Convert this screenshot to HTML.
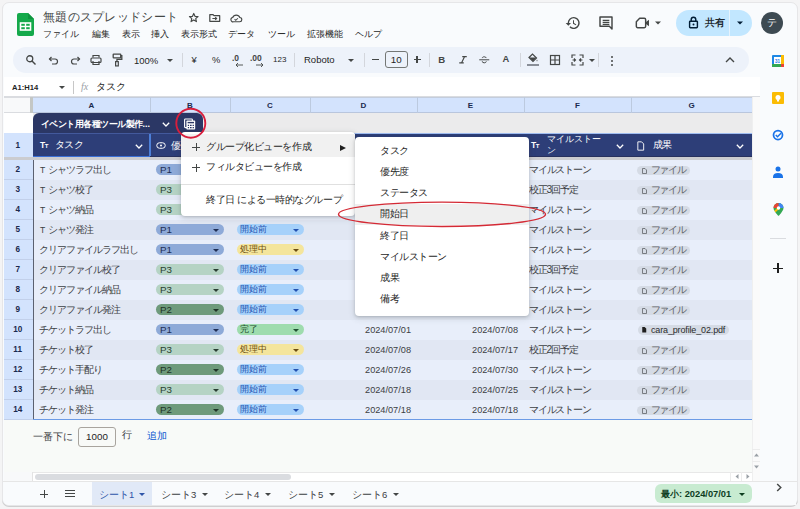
<!DOCTYPE html><html lang="ja"><head><meta charset="utf-8"><style>
*{box-sizing:border-box}
html,body{margin:0;padding:0}
body{width:800px;height:509px;overflow:hidden;position:relative;background:#f4f4f5;font-family:"Liberation Sans",sans-serif;}
.a{position:absolute}
.t{position:absolute;white-space:nowrap;line-height:1}
svg{position:absolute;overflow:visible}
</style></head><body>
<div class="a" style="left:2px;top:2px;width:796px;height:504px;background:#f9fbfd;border:1px solid #e6e6e8;border-radius:7px;box-shadow:0 1px 0 #cfcfd0"></div>
<svg style="left:17px;top:13px" width="17" height="23" viewBox="0 0 17 23"><path d="M2 0H11L17 6V21Q17 23 15 23H2Q0 23 0 21V2Q0 0 2 0Z" fill="#14a94b"/><path d="M11 0V6H17Z" fill="#0e943f"/><rect x="3.5" y="10" width="10" height="7" fill="none" stroke="#fff" stroke-width="1.6"/><line x1="8.5" y1="10" x2="8.5" y2="17" stroke="#fff" stroke-width="1.4"/><line x1="3.5" y1="13.5" x2="13.5" y2="13.5" stroke="#fff" stroke-width="1.4"/></svg>
<div class="t" style="left:43px;top:11.2px;font-size:12.4px;color:#444746;letter-spacing:0.3px">無題のスプレッドシート</div>
<svg style="left:187.5px;top:12px" width="11.5" height="11.5" viewBox="0 0 24 24"><path d="M12 3l2.6 6 6.4.5-4.9 4.2 1.5 6.3L12 16.6 6.4 20l1.5-6.3L3 9.5 9.4 9z" fill="none" stroke="#444746" stroke-width="2.4" stroke-linejoin="round"/></svg>
<svg style="left:209px;top:13.5px" width="11.5" height="8" viewBox="0 0 24 17"><path d="M1.5 1.5h7l2 2h12v12h-21z" fill="none" stroke="#444746" stroke-width="2.6" stroke-linejoin="round"/><path d="M7 9.5h9M13 6.5l3 3-3 3" fill="none" stroke="#444746" stroke-width="2.4"/></svg>
<svg style="left:230px;top:13.5px" width="12.5" height="8.5" viewBox="0 0 26 18"><path d="M7 16.5h13a4.5 4.5 0 0 0 .5-9A8 8 0 0 0 5.5 7.5 4.5 4.5 0 0 0 7 16.5z" fill="none" stroke="#444746" stroke-width="2.4"/><path d="M9.5 11l2.5 2.5 4.5-4.5" fill="none" stroke="#444746" stroke-width="2.2"/></svg>
<div class="t" style="left:43px;top:30px;font-size:9.3px;color:#1f1f1f;">ファイル</div>
<div class="t" style="left:92px;top:30px;font-size:9.3px;color:#1f1f1f;">編集</div>
<div class="t" style="left:122px;top:30px;font-size:9.3px;color:#1f1f1f;">表示</div>
<div class="t" style="left:151px;top:30px;font-size:9.3px;color:#1f1f1f;">挿入</div>
<div class="t" style="left:181px;top:30px;font-size:9.3px;color:#1f1f1f;">表示形式</div>
<div class="t" style="left:228px;top:30px;font-size:9.3px;color:#1f1f1f;">データ</div>
<div class="t" style="left:268px;top:30px;font-size:9.3px;color:#1f1f1f;">ツール</div>
<div class="t" style="left:307px;top:30px;font-size:9.3px;color:#1f1f1f;">拡張機能</div>
<div class="t" style="left:355px;top:30px;font-size:9.3px;color:#1f1f1f;">ヘルプ</div>
<svg style="left:565px;top:15px" width="16" height="16" viewBox="0 0 24 24"><path d="M13 3a9 9 0 0 0-9 9H1l4 4 4-4H6a7 7 0 1 1 2.05 4.95L6.64 18.36A9 9 0 1 0 13 3z" fill="#444746"/><path d="M12 8v5l4.25 2.52.77-1.28-3.52-2.09V8z" fill="#444746"/></svg>
<svg style="left:598px;top:15px" width="16" height="16" viewBox="0 0 24 24"><path d="M3 3h18v18l-4-4H3z" fill="none" stroke="#444746" stroke-width="2.2" stroke-linejoin="round"/><path d="M7 8h10M7 11h10M7 14h10" stroke="#444746" stroke-width="1.8"/></svg>
<svg style="left:635px;top:16px" width="16" height="14" viewBox="0 0 24 20"><path d="M7 3h7a2 2 0 0 1 2 2v10a2 2 0 0 1-2 2H4a2 2 0 0 1-2-2V8z" fill="none" stroke="#444746" stroke-width="2.2" stroke-linejoin="round"/><path d="M16 9l5-4v10l-5-4z" fill="#444746"/></svg>
<svg style="left:655px;top:21px" width="6" height="4" viewBox="0 0 10 5"><path d="M0 0h10L5 5z" fill="#444746"/></svg>
<div class="a" style="left:676px;top:10px;width:76px;height:26px;background:#c2e7ff;border-radius:13px"></div>
<div class="a" style="left:729px;top:10px;width:1px;height:26px;background:#e6f3fd"></div>
<svg style="left:688px;top:16px" width="11" height="13" viewBox="0 0 16 20"><rect x="2" y="8" width="12" height="10" rx="1" fill="none" stroke="#001d35" stroke-width="2.2"/><path d="M4.5 8V5.5a3.5 3.5 0 0 1 7 0V8" fill="none" stroke="#001d35" stroke-width="2.2"/><circle cx="8" cy="13" r="1.5" fill="#001d35"/></svg>
<div class="t" style="left:705px;top:18px;font-size:9.5px;color:#1f2a33;font-weight:bold">共有</div>
<svg style="left:737px;top:21px" width="6" height="4" viewBox="0 0 10 5"><path d="M0 0h10L5 5z" fill="#001d35"/></svg>
<div class="a" style="left:761px;top:12px;width:22px;height:22px;background:#3d4a52;border-radius:50%"></div>
<div class="t" style="left:767px;top:18px;font-size:10px;color:#fff;">テ</div>
<div class="a" style="left:13px;top:47px;width:736px;height:26px;background:#edf2fa;border-radius:13px"></div>
<svg style="left:25px;top:54px" width="12" height="12" viewBox="0 0 24 24"><circle cx="9.5" cy="9.5" r="6" fill="none" stroke="#444746" stroke-width="2.6"/><path d="M14 14l7 7" stroke="#444746" stroke-width="2.8"/></svg>
<svg style="left:48px;top:55px" width="12" height="11" viewBox="0 0 24 22"><path d="M7 4L3 8l4 4" fill="none" stroke="#444746" stroke-width="2.4"/><path d="M3 8h11a5 5 0 0 1 0 10H8" fill="none" stroke="#444746" stroke-width="2.4"/></svg>
<svg style="left:69px;top:55px" width="12" height="11" viewBox="0 0 24 22"><path d="M17 4l4 4-4 4" fill="none" stroke="#444746" stroke-width="2.4"/><path d="M21 8H10a5 5 0 0 0 0 10h6" fill="none" stroke="#444746" stroke-width="2.4"/></svg>
<svg style="left:90px;top:54px" width="12" height="12" viewBox="0 0 24 24"><path d="M6 7V3h12v4" fill="none" stroke="#444746" stroke-width="2.4"/><rect x="2" y="8" width="20" height="9" rx="2" fill="none" stroke="#444746" stroke-width="2.4"/><path d="M6 14v7h12v-7" fill="none" stroke="#444746" stroke-width="2.4"/></svg>
<svg style="left:112px;top:53px" width="11" height="14" viewBox="0 0 20 26"><rect x="2" y="2" width="14" height="7" rx="1" fill="none" stroke="#444746" stroke-width="2.4"/><path d="M16 5h2v7H9v4" fill="none" stroke="#444746" stroke-width="2.4"/><rect x="6.5" y="16" width="5" height="8" fill="none" stroke="#444746" stroke-width="2.2"/></svg>
<div class="t" style="left:134px;top:56px;font-size:9.5px;color:#1f1f1f;">100%</div>
<svg style="left:167px;top:59px" width="6" height="3" viewBox="0 0 10 5"><path d="M0 0h10L5 5z" fill="#444746"/></svg>
<div class="a" style="left:182px;top:53px;width:1px;height:14px;background:#d3d6dc"></div>
<div class="t" style="left:191.5px;top:55px;font-size:9.4px;color:#1f1f1f;">¥</div>
<div class="t" style="left:212px;top:55px;font-size:9.4px;color:#1f1f1f;">%</div>
<div class="t" style="left:232px;top:54px;font-size:8.5px;color:#444746;font-weight:bold">.0</div>
<svg style="left:236px;top:63px" width="7" height="4" viewBox="0 0 14 8"><path d="M4 0L0 4l4 4M0 4h14" fill="none" stroke="#444746" stroke-width="1.8"/></svg>
<div class="t" style="left:250px;top:54px;font-size:8.5px;color:#444746;font-weight:bold">.00</div>
<svg style="left:256px;top:63px" width="7" height="4" viewBox="0 0 14 8"><path d="M10 0l4 4-4 4M14 4H0" fill="none" stroke="#444746" stroke-width="1.8"/></svg>
<div class="t" style="left:273px;top:56px;font-size:8px;color:#1f1f1f;">123</div>
<div class="a" style="left:294px;top:53px;width:1px;height:14px;background:#d3d6dc"></div>
<div class="t" style="left:304px;top:55px;font-size:9.5px;color:#1f1f1f;">Roboto</div>
<svg style="left:348px;top:59px" width="6" height="3" viewBox="0 0 10 5"><path d="M0 0h10L5 5z" fill="#444746"/></svg>
<div class="a" style="left:364px;top:53px;width:1px;height:14px;background:#d3d6dc"></div>
<div class="a" style="left:371.5px;top:59px;width:7px;height:1.2px;background:#444746"></div>
<div class="a" style="left:385px;top:51px;width:23px;height:17px;border:1px solid #747775;border-radius:3px"></div>
<div class="t" style="left:390.8px;top:54.5px;font-size:9.8px;color:#1f1f1f;">10</div>
<div class="a" style="left:413.5px;top:59px;width:7px;height:1.2px;background:#444746"></div>
<div class="a" style="left:416.4px;top:56px;width:1.2px;height:7px;background:#444746"></div>
<div class="a" style="left:429px;top:53px;width:1px;height:14px;background:#d3d6dc"></div>
<div class="t" style="left:438.2px;top:54.6px;font-size:9.6px;color:#444746;font-weight:bold">B</div>
<svg style="left:458.5px;top:56.2px" width="8" height="7.6" viewBox="0 0 16 15"><path d="M6.5 1.2h9M0.5 13.8h9M11 1.2L5 13.8" fill="none" stroke="#444746" stroke-width="2.3"/></svg>
<svg style="left:478.5px;top:56.2px" width="10.5" height="7.6" viewBox="0 0 21 15"><path d="M14.5 4a4.2 3 0 0 0-4-2.5c-2.5 0-4 1.2-4 2.6M6.5 10.5a4 3 0 0 0 4 3c2.6 0 4-1.2 4-3" fill="none" stroke="#444746" stroke-width="2"/><path d="M0.5 7.5h20" stroke="#444746" stroke-width="2"/></svg>
<div class="t" style="left:502.5px;top:54.2px;font-size:9.4px;color:#444746;font-weight:bold">A</div>
<div class="a" style="left:520px;top:53px;width:1px;height:14px;background:#d3d6dc"></div>
<svg style="left:527px;top:52px" width="12" height="15" viewBox="0 0 24 30"><path d="M4 11l7-7 8 8-7 7z" fill="none" stroke="#444746" stroke-width="2.4"/><path d="M4 11h15l-7 7z" fill="#444746"/><path d="M20 15q2 3 0 4q-2-1 0-4z" fill="#444746"/><rect x="0" y="24" width="24" height="4" fill="#8a8f98"/></svg>
<svg style="left:549px;top:54px" width="12" height="12" viewBox="0 0 24 24"><rect x="3" y="3" width="18" height="18" fill="none" stroke="#444746" stroke-width="2.4"/><path d="M12 3v18M3 12h18" stroke="#444746" stroke-width="2.4"/></svg>
<svg style="left:571px;top:54px" width="13" height="12" viewBox="0 0 26 24"><path d="M2 8V2h7M17 2h7v6M2 16v6h7M17 22h7v-6" fill="none" stroke="#444746" stroke-width="2.4"/><path d="M9 12H3M17 12h6M6 9l3 3-3 3M20 9l-3 3 3 3" fill="none" stroke="#444746" stroke-width="2.2"/></svg>
<svg style="left:589px;top:59px" width="6" height="3" viewBox="0 0 10 5"><path d="M0 0h10L5 5z" fill="#444746"/></svg>
<div class="a" style="left:598px;top:53px;width:1px;height:14px;background:#d3d6dc"></div>
<div class="a" style="left:610.5px;top:55.5px;width:2.2px;height:2.2px;background:#444746;border-radius:50%"></div>
<div class="a" style="left:610.5px;top:59.5px;width:2.2px;height:2.2px;background:#444746;border-radius:50%"></div>
<div class="a" style="left:610.5px;top:63.5px;width:2.2px;height:2.2px;background:#444746;border-radius:50%"></div>
<svg style="left:725px;top:57px" width="10" height="6" viewBox="0 0 20 12"><path d="M2 10l8-8 8 8" fill="none" stroke="#444746" stroke-width="2.8"/></svg>
<div class="a" style="left:4px;top:77px;width:756px;height:20px;background:#fff;border-bottom:1px solid #dadce0"></div>
<div class="t" style="left:12px;top:83.5px;font-size:7.6px;color:#1f1f1f;font-weight:bold">A1:H14</div>
<svg style="left:59px;top:86px" width="6" height="3" viewBox="0 0 10 5"><path d="M0 0h10L5 5z" fill="#444746"/></svg>
<div class="a" style="left:73px;top:81px;width:1px;height:13px;background:#c7c7c7"></div>
<div class="t" style="left:81px;top:82px;font-size:10px;color:#9aa0a6;font-style:italic;font-family:'Liberation Serif',serif">fx</div>
<div class="t" style="left:96px;top:81.5px;font-size:10px;color:#1f1f1f;">タスク</div>
<div class="a" style="left:760px;top:40px;width:36px;height:465px;background:#f9fbfd"></div>
<div class="a" style="left:4px;top:97px;width:756px;height:384px;background:#fff"></div>
<div class="a" style="left:4px;top:97px;width:26px;height:16px;background:#f8f9fa;border-top:1px solid #dadce0;border-bottom:1px solid #dadce0"></div>
<div class="a" style="left:30px;top:97px;width:3px;height:16px;background:#c4c7c5"></div>
<div class="a" style="left:33px;top:97px;width:719px;height:16px;background:#d3e3fd;border-top:1px solid #c4cddc;border-bottom:1px solid #b9c6dd"></div>
<div class="t" style="left:33px;top:101.5px;width:117px;text-align:center;font-size:8px;font-weight:bold;color:#1b2a4e">A</div>
<div class="a" style="left:150px;top:97px;width:1px;height:16px;background:#bccadf"></div>
<div class="t" style="left:150px;top:101.5px;width:80px;text-align:center;font-size:8px;font-weight:bold;color:#1b2a4e">B</div>
<div class="a" style="left:230px;top:97px;width:1px;height:16px;background:#bccadf"></div>
<div class="t" style="left:230px;top:101.5px;width:80px;text-align:center;font-size:8px;font-weight:bold;color:#1b2a4e">C</div>
<div class="a" style="left:310px;top:97px;width:1px;height:16px;background:#bccadf"></div>
<div class="t" style="left:310px;top:101.5px;width:107px;text-align:center;font-size:8px;font-weight:bold;color:#1b2a4e">D</div>
<div class="a" style="left:417px;top:97px;width:1px;height:16px;background:#bccadf"></div>
<div class="t" style="left:417px;top:101.5px;width:107px;text-align:center;font-size:8px;font-weight:bold;color:#1b2a4e">E</div>
<div class="a" style="left:524px;top:97px;width:1px;height:16px;background:#bccadf"></div>
<div class="t" style="left:524px;top:101.5px;width:107px;text-align:center;font-size:8px;font-weight:bold;color:#1b2a4e">F</div>
<div class="a" style="left:631px;top:97px;width:1px;height:16px;background:#bccadf"></div>
<div class="t" style="left:631px;top:101.5px;width:121px;text-align:center;font-size:8px;font-weight:bold;color:#1b2a4e">G</div>
<div class="a" style="left:33px;top:113px;width:719px;height:20px;background:#ebebec"></div>
<div class="a" style="left:33px;top:113px;width:170px;height:20px;background:#2b3765;border-radius:6px 6px 0 0"></div>
<div class="t" style="left:41px;top:119.5px;font-size:9px;color:#ffffff;font-weight:bold;letter-spacing:-0.55px">イベント用各種ツール製作<span style='letter-spacing:0'>...</span></div>
<svg style="left:162px;top:122px" width="8" height="4.8" viewBox="0 0 10 6"><path d="M1 1l4 4 4-4" fill="none" stroke="#fff" stroke-width="1.6"/></svg>
<svg style="left:0;top:0" width="800" height="509"><rect x="184.6" y="119" width="7.8" height="8.6" rx="0.8" fill="none" stroke="#fff" stroke-width="1.1"/><rect x="186.4" y="120.6" width="8.8" height="9" rx="0.8" fill="#fff"/><rect x="187.6" y="121.9" width="6.4" height="1.4" fill="#2b3765"/><path d="M187.8 125.3h1.3M190 125.3h1.6M192.6 125.3h1.3M187.8 127.6h1.3M190 127.6h1.6M192.6 127.6h1.3" stroke="#2b3765" stroke-width="1.2"/></svg>
<div class="a" style="left:4px;top:133px;width:29px;height:24px;background:#d3e3fd"></div>
<div class="t" style="left:3.2px;top:142px;width:29px;text-align:center;font-size:8.2px;font-weight:bold;color:#1b2a4e">1</div>
<div class="a" style="left:33px;top:133px;width:719px;height:24px;background:#2d3e78"></div>
<div class="a" style="left:149px;top:133px;width:1.5px;height:24px;background:#4c7fd8"></div>
<div class="a" style="left:33px;top:156px;width:117px;height:1.5px;background:#3a6fd6"></div>
<div class="a" style="left:203px;top:132.5px;width:549px;height:1px;background:#9fbcf0"></div>
<div class="a" style="left:33px;top:132.5px;width:170px;height:1px;background:#43599c"></div>
<div class="t" style="left:40px;top:141px;font-size:8.5px;color:#fff;font-weight:bold;letter-spacing:-0.5px">T<span style='font-size:6px'>T</span></div>
<div class="t" style="left:54.8px;top:140.2px;font-size:10.3px;color:#fff;letter-spacing:-0.55px">タスク</div>
<svg style="left:135px;top:144px" width="8" height="4.8" viewBox="0 0 10 6"><path d="M1 1l4 4 4-4" fill="none" stroke="#fff" stroke-width="1.6"/></svg>
<svg style="left:155.5px;top:141.5px" width="10" height="7" viewBox="0 0 20 14"><rect x="1.5" y="1.5" width="17" height="11" rx="5.5" fill="none" stroke="#fff" stroke-width="2"/><circle cx="10" cy="7" r="2" fill="#fff"/></svg>
<div class="t" style="left:171px;top:140.5px;font-size:10px;color:#fff;letter-spacing:-0.5px">優先度</div>
<div class="t" style="left:531px;top:141px;font-size:8.5px;color:#fff;font-weight:bold;letter-spacing:-0.5px">T<span style='font-size:6px'>T</span></div>
<div class="t" style="left:547px;top:135px;font-size:9.3px;color:#fff;">マイルストー</div>
<div class="t" style="left:547px;top:146px;font-size:9.3px;color:#fff;">ン</div>
<svg style="left:616px;top:144px" width="8" height="4.8" viewBox="0 0 10 6"><path d="M1 1l4 4 4-4" fill="none" stroke="#fff" stroke-width="1.6"/></svg>
<svg style="left:637px;top:140.5px" width="7.5" height="10" viewBox="0 0 18 24"><path d="M2 2h9l5 5v15H2z" fill="none" stroke="#fff" stroke-width="2.2" stroke-linejoin="round"/></svg>
<div class="t" style="left:653px;top:140.2px;font-size:10px;color:#fff;letter-spacing:-0.6px">成果</div>
<svg style="left:736px;top:144px" width="8" height="4.8" viewBox="0 0 10 6"><path d="M1 1l4 4 4-4" fill="none" stroke="#fff" stroke-width="1.6"/></svg>
<div class="a" style="left:150px;top:156px;width:602px;height:1px;background:#27315e"></div>
<div class="a" style="left:4px;top:157px;width:756px;height:3px;background:#cbccd0"></div>
<div class="a" style="left:33px;top:160px;width:719px;height:20px;background:#e8eefa"></div>
<div class="a" style="left:4px;top:160px;width:29px;height:20px;background:#d3e3fd;border-bottom:1px solid #c2d0ea"></div>
<div class="t" style="left:3.2px;top:166px;width:29px;text-align:center;font-size:8.2px;font-weight:bold;color:#1b2a4e">2</div>
<div class="t" style="left:38.5px;top:164.5px;font-size:10.3px;color:#3c4043;letter-spacing:-1px"><span style="font-size:8.6px;letter-spacing:0;margin-right:2.6px;margin-left:1.5px">T</span>シャツラフ出し</div>
<div class="a" style="left:156px;top:164px;width:68px;height:10.6px;background:#8eaad8;border-radius:6px"></div>
<div class="t" style="left:160px;top:165.2px;font-size:9.8px;color:#1f2f55;">P1</div>
<svg style="left:213px;top:168.5px" width="6" height="3" viewBox="0 0 10 5"><path d="M0 0h10L5 5z" fill="#1f2f55"/></svg>
<div class="a" style="left:237px;top:164px;width:67px;height:10.6px;background:#a6d1fa;border-radius:6px"></div>
<div class="t" style="left:240px;top:165.3px;font-size:9.2px;color:#2352b0;letter-spacing:-0.2px">開始前</div>
<svg style="left:293px;top:168.5px" width="6" height="3" viewBox="0 0 10 5"><path d="M0 0h10L5 5z" fill="#2352b0"/></svg>
<div class="t" style="left:529px;top:164.5px;font-size:10.3px;color:#3c4043;letter-spacing:-1.2px">マイルストーン</div>
<div class="a" style="left:637px;top:166px;width:53px;height:9px;background:#d5dbe5;border-radius:5px"></div>
<svg style="left:641.5px;top:167.5px" width="5" height="6" viewBox="0 0 10 12"><path d="M1 1h5l3 3v7H1z" fill="none" stroke="#5f6368" stroke-width="1.6"/></svg>
<div class="t" style="left:650.5px;top:164.8px;font-size:10.3px;color:#5f6368;letter-spacing:-1.2px">ファイル</div>
<div class="a" style="left:33px;top:180px;width:719px;height:20px;background:#e1e7f3"></div>
<div class="a" style="left:4px;top:180px;width:29px;height:20px;background:#d3e3fd;border-bottom:1px solid #c2d0ea"></div>
<div class="t" style="left:3.2px;top:186px;width:29px;text-align:center;font-size:8.2px;font-weight:bold;color:#1b2a4e">3</div>
<div class="t" style="left:38.5px;top:184.5px;font-size:10.3px;color:#3c4043;letter-spacing:-1px"><span style="font-size:8.6px;letter-spacing:0;margin-right:2.6px;margin-left:1.5px">T</span>シャツ校了</div>
<div class="a" style="left:156px;top:184px;width:68px;height:10.6px;background:#b5d3c4;border-radius:6px"></div>
<div class="t" style="left:160px;top:185.2px;font-size:9.8px;color:#2a3f33;">P3</div>
<svg style="left:213px;top:188.5px" width="6" height="3" viewBox="0 0 10 5"><path d="M0 0h10L5 5z" fill="#2a3f33"/></svg>
<div class="a" style="left:237px;top:184px;width:67px;height:10.6px;background:#a6d1fa;border-radius:6px"></div>
<div class="t" style="left:240px;top:185.3px;font-size:9.2px;color:#2352b0;letter-spacing:-0.2px">開始前</div>
<svg style="left:293px;top:188.5px" width="6" height="3" viewBox="0 0 10 5"><path d="M0 0h10L5 5z" fill="#2352b0"/></svg>
<div class="t" style="left:529px;top:184.5px;font-size:10.3px;color:#3c4043;letter-spacing:-1.2px">校正3回予定</div>
<div class="a" style="left:637px;top:186px;width:53px;height:9px;background:#d5dbe5;border-radius:5px"></div>
<svg style="left:641.5px;top:187.5px" width="5" height="6" viewBox="0 0 10 12"><path d="M1 1h5l3 3v7H1z" fill="none" stroke="#5f6368" stroke-width="1.6"/></svg>
<div class="t" style="left:650.5px;top:184.8px;font-size:10.3px;color:#5f6368;letter-spacing:-1.2px">ファイル</div>
<div class="a" style="left:33px;top:200px;width:719px;height:20px;background:#e8eefa"></div>
<div class="a" style="left:4px;top:200px;width:29px;height:20px;background:#d3e3fd;border-bottom:1px solid #c2d0ea"></div>
<div class="t" style="left:3.2px;top:206px;width:29px;text-align:center;font-size:8.2px;font-weight:bold;color:#1b2a4e">4</div>
<div class="t" style="left:38.5px;top:204.5px;font-size:10.3px;color:#3c4043;letter-spacing:-1px"><span style="font-size:8.6px;letter-spacing:0;margin-right:2.6px;margin-left:1.5px">T</span>シャツ納品</div>
<div class="a" style="left:156px;top:204px;width:68px;height:10.6px;background:#b5d3c4;border-radius:6px"></div>
<div class="t" style="left:160px;top:205.2px;font-size:9.8px;color:#2a3f33;">P3</div>
<svg style="left:213px;top:208.5px" width="6" height="3" viewBox="0 0 10 5"><path d="M0 0h10L5 5z" fill="#2a3f33"/></svg>
<div class="a" style="left:237px;top:204px;width:67px;height:10.6px;background:#a6d1fa;border-radius:6px"></div>
<div class="t" style="left:240px;top:205.3px;font-size:9.2px;color:#2352b0;letter-spacing:-0.2px">開始前</div>
<svg style="left:293px;top:208.5px" width="6" height="3" viewBox="0 0 10 5"><path d="M0 0h10L5 5z" fill="#2352b0"/></svg>
<div class="t" style="left:529px;top:204.5px;font-size:10.3px;color:#3c4043;letter-spacing:-1.2px">マイルストーン</div>
<div class="a" style="left:637px;top:206px;width:53px;height:9px;background:#d5dbe5;border-radius:5px"></div>
<svg style="left:641.5px;top:207.5px" width="5" height="6" viewBox="0 0 10 12"><path d="M1 1h5l3 3v7H1z" fill="none" stroke="#5f6368" stroke-width="1.6"/></svg>
<div class="t" style="left:650.5px;top:204.8px;font-size:10.3px;color:#5f6368;letter-spacing:-1.2px">ファイル</div>
<div class="a" style="left:33px;top:220px;width:719px;height:20px;background:#e1e7f3"></div>
<div class="a" style="left:4px;top:220px;width:29px;height:20px;background:#d3e3fd;border-bottom:1px solid #c2d0ea"></div>
<div class="t" style="left:3.2px;top:226px;width:29px;text-align:center;font-size:8.2px;font-weight:bold;color:#1b2a4e">5</div>
<div class="t" style="left:38.5px;top:224.5px;font-size:10.3px;color:#3c4043;letter-spacing:-1px"><span style="font-size:8.6px;letter-spacing:0;margin-right:2.6px;margin-left:1.5px">T</span>シャツ発注</div>
<div class="a" style="left:156px;top:224px;width:68px;height:10.6px;background:#8eaad8;border-radius:6px"></div>
<div class="t" style="left:160px;top:225.2px;font-size:9.8px;color:#1f2f55;">P1</div>
<svg style="left:213px;top:228.5px" width="6" height="3" viewBox="0 0 10 5"><path d="M0 0h10L5 5z" fill="#1f2f55"/></svg>
<div class="a" style="left:237px;top:224px;width:67px;height:10.6px;background:#a6d1fa;border-radius:6px"></div>
<div class="t" style="left:240px;top:225.3px;font-size:9.2px;color:#2352b0;letter-spacing:-0.2px">開始前</div>
<svg style="left:293px;top:228.5px" width="6" height="3" viewBox="0 0 10 5"><path d="M0 0h10L5 5z" fill="#2352b0"/></svg>
<div class="t" style="left:529px;top:224.5px;font-size:10.3px;color:#3c4043;letter-spacing:-1.2px">マイルストーン</div>
<div class="a" style="left:637px;top:226px;width:53px;height:9px;background:#d5dbe5;border-radius:5px"></div>
<svg style="left:641.5px;top:227.5px" width="5" height="6" viewBox="0 0 10 12"><path d="M1 1h5l3 3v7H1z" fill="none" stroke="#5f6368" stroke-width="1.6"/></svg>
<div class="t" style="left:650.5px;top:224.8px;font-size:10.3px;color:#5f6368;letter-spacing:-1.2px">ファイル</div>
<div class="a" style="left:33px;top:240px;width:719px;height:20px;background:#e8eefa"></div>
<div class="a" style="left:4px;top:240px;width:29px;height:20px;background:#d3e3fd;border-bottom:1px solid #c2d0ea"></div>
<div class="t" style="left:3.2px;top:246px;width:29px;text-align:center;font-size:8.2px;font-weight:bold;color:#1b2a4e">6</div>
<div class="t" style="left:38.5px;top:244.5px;font-size:10.3px;color:#3c4043;letter-spacing:-1px">クリアファイルラフ出し</div>
<div class="a" style="left:156px;top:244px;width:68px;height:10.6px;background:#8eaad8;border-radius:6px"></div>
<div class="t" style="left:160px;top:245.2px;font-size:9.8px;color:#1f2f55;">P1</div>
<svg style="left:213px;top:248.5px" width="6" height="3" viewBox="0 0 10 5"><path d="M0 0h10L5 5z" fill="#1f2f55"/></svg>
<div class="a" style="left:237px;top:244px;width:67px;height:10.6px;background:#f4e59c;border-radius:6px"></div>
<div class="t" style="left:240px;top:245.3px;font-size:9.2px;color:#6b4e12;letter-spacing:-0.2px">処理中</div>
<svg style="left:293px;top:248.5px" width="6" height="3" viewBox="0 0 10 5"><path d="M0 0h10L5 5z" fill="#6b4e12"/></svg>
<div class="t" style="left:529px;top:244.5px;font-size:10.3px;color:#3c4043;letter-spacing:-1.2px">マイルストーン</div>
<div class="a" style="left:637px;top:246px;width:53px;height:9px;background:#d5dbe5;border-radius:5px"></div>
<svg style="left:641.5px;top:247.5px" width="5" height="6" viewBox="0 0 10 12"><path d="M1 1h5l3 3v7H1z" fill="none" stroke="#5f6368" stroke-width="1.6"/></svg>
<div class="t" style="left:650.5px;top:244.8px;font-size:10.3px;color:#5f6368;letter-spacing:-1.2px">ファイル</div>
<div class="a" style="left:33px;top:260px;width:719px;height:20px;background:#e1e7f3"></div>
<div class="a" style="left:4px;top:260px;width:29px;height:20px;background:#d3e3fd;border-bottom:1px solid #c2d0ea"></div>
<div class="t" style="left:3.2px;top:266px;width:29px;text-align:center;font-size:8.2px;font-weight:bold;color:#1b2a4e">7</div>
<div class="t" style="left:38.5px;top:264.5px;font-size:10.3px;color:#3c4043;letter-spacing:-1px">クリアファイル校了</div>
<div class="a" style="left:156px;top:264px;width:68px;height:10.6px;background:#b5d3c4;border-radius:6px"></div>
<div class="t" style="left:160px;top:265.2px;font-size:9.8px;color:#2a3f33;">P3</div>
<svg style="left:213px;top:268.5px" width="6" height="3" viewBox="0 0 10 5"><path d="M0 0h10L5 5z" fill="#2a3f33"/></svg>
<div class="a" style="left:237px;top:264px;width:67px;height:10.6px;background:#a6d1fa;border-radius:6px"></div>
<div class="t" style="left:240px;top:265.3px;font-size:9.2px;color:#2352b0;letter-spacing:-0.2px">開始前</div>
<svg style="left:293px;top:268.5px" width="6" height="3" viewBox="0 0 10 5"><path d="M0 0h10L5 5z" fill="#2352b0"/></svg>
<div class="t" style="left:529px;top:264.5px;font-size:10.3px;color:#3c4043;letter-spacing:-1.2px">校正3回予定</div>
<div class="a" style="left:637px;top:266px;width:53px;height:9px;background:#d5dbe5;border-radius:5px"></div>
<svg style="left:641.5px;top:267.5px" width="5" height="6" viewBox="0 0 10 12"><path d="M1 1h5l3 3v7H1z" fill="none" stroke="#5f6368" stroke-width="1.6"/></svg>
<div class="t" style="left:650.5px;top:264.8px;font-size:10.3px;color:#5f6368;letter-spacing:-1.2px">ファイル</div>
<div class="a" style="left:33px;top:280px;width:719px;height:20px;background:#e8eefa"></div>
<div class="a" style="left:4px;top:280px;width:29px;height:20px;background:#d3e3fd;border-bottom:1px solid #c2d0ea"></div>
<div class="t" style="left:3.2px;top:286px;width:29px;text-align:center;font-size:8.2px;font-weight:bold;color:#1b2a4e">8</div>
<div class="t" style="left:38.5px;top:284.5px;font-size:10.3px;color:#3c4043;letter-spacing:-1px">クリアファイル納品</div>
<div class="a" style="left:156px;top:284px;width:68px;height:10.6px;background:#b5d3c4;border-radius:6px"></div>
<div class="t" style="left:160px;top:285.2px;font-size:9.8px;color:#2a3f33;">P3</div>
<svg style="left:213px;top:288.5px" width="6" height="3" viewBox="0 0 10 5"><path d="M0 0h10L5 5z" fill="#2a3f33"/></svg>
<div class="a" style="left:237px;top:284px;width:67px;height:10.6px;background:#a6d1fa;border-radius:6px"></div>
<div class="t" style="left:240px;top:285.3px;font-size:9.2px;color:#2352b0;letter-spacing:-0.2px">開始前</div>
<svg style="left:293px;top:288.5px" width="6" height="3" viewBox="0 0 10 5"><path d="M0 0h10L5 5z" fill="#2352b0"/></svg>
<div class="t" style="left:529px;top:284.5px;font-size:10.3px;color:#3c4043;letter-spacing:-1.2px">マイルストーン</div>
<div class="a" style="left:637px;top:286px;width:53px;height:9px;background:#d5dbe5;border-radius:5px"></div>
<svg style="left:641.5px;top:287.5px" width="5" height="6" viewBox="0 0 10 12"><path d="M1 1h5l3 3v7H1z" fill="none" stroke="#5f6368" stroke-width="1.6"/></svg>
<div class="t" style="left:650.5px;top:284.8px;font-size:10.3px;color:#5f6368;letter-spacing:-1.2px">ファイル</div>
<div class="a" style="left:33px;top:300px;width:719px;height:20px;background:#e1e7f3"></div>
<div class="a" style="left:4px;top:300px;width:29px;height:20px;background:#d3e3fd;border-bottom:1px solid #c2d0ea"></div>
<div class="t" style="left:3.2px;top:306px;width:29px;text-align:center;font-size:8.2px;font-weight:bold;color:#1b2a4e">9</div>
<div class="t" style="left:38.5px;top:304.5px;font-size:10.3px;color:#3c4043;letter-spacing:-1px">クリアファイル発注</div>
<div class="a" style="left:156px;top:304px;width:68px;height:10.6px;background:#6e9a7b;border-radius:6px"></div>
<div class="t" style="left:160px;top:305.2px;font-size:9.8px;color:#1e3326;">P2</div>
<svg style="left:213px;top:308.5px" width="6" height="3" viewBox="0 0 10 5"><path d="M0 0h10L5 5z" fill="#1e3326"/></svg>
<div class="a" style="left:237px;top:304px;width:67px;height:10.6px;background:#a6d1fa;border-radius:6px"></div>
<div class="t" style="left:240px;top:305.3px;font-size:9.2px;color:#2352b0;letter-spacing:-0.2px">開始前</div>
<svg style="left:293px;top:308.5px" width="6" height="3" viewBox="0 0 10 5"><path d="M0 0h10L5 5z" fill="#2352b0"/></svg>
<div class="t" style="left:529px;top:304.5px;font-size:10.3px;color:#3c4043;letter-spacing:-1.2px">マイルストーン</div>
<div class="a" style="left:637px;top:306px;width:53px;height:9px;background:#d5dbe5;border-radius:5px"></div>
<svg style="left:641.5px;top:307.5px" width="5" height="6" viewBox="0 0 10 12"><path d="M1 1h5l3 3v7H1z" fill="none" stroke="#5f6368" stroke-width="1.6"/></svg>
<div class="t" style="left:650.5px;top:304.8px;font-size:10.3px;color:#5f6368;letter-spacing:-1.2px">ファイル</div>
<div class="a" style="left:33px;top:320px;width:719px;height:20px;background:#e8eefa"></div>
<div class="a" style="left:4px;top:320px;width:29px;height:20px;background:#d3e3fd;border-bottom:1px solid #c2d0ea"></div>
<div class="t" style="left:3.2px;top:326px;width:29px;text-align:center;font-size:8.2px;font-weight:bold;color:#1b2a4e">10</div>
<div class="t" style="left:38.5px;top:324.5px;font-size:10.3px;color:#3c4043;letter-spacing:-1px">チケットラフ出し</div>
<div class="a" style="left:156px;top:324px;width:68px;height:10.6px;background:#8eaad8;border-radius:6px"></div>
<div class="t" style="left:160px;top:325.2px;font-size:9.8px;color:#1f2f55;">P1</div>
<svg style="left:213px;top:328.5px" width="6" height="3" viewBox="0 0 10 5"><path d="M0 0h10L5 5z" fill="#1f2f55"/></svg>
<div class="a" style="left:237px;top:324px;width:67px;height:10.6px;background:#9edcae;border-radius:6px"></div>
<div class="t" style="left:240px;top:325.3px;font-size:9.2px;color:#1f5130;letter-spacing:-0.2px">完了</div>
<svg style="left:293px;top:328.5px" width="6" height="3" viewBox="0 0 10 5"><path d="M0 0h10L5 5z" fill="#1f5130"/></svg>
<div class="t" style="left:310px;top:325.5px;width:101px;text-align:right;font-size:9.2px;color:#3c4043">2024/07/01</div>
<div class="t" style="left:417px;top:325.5px;width:101px;text-align:right;font-size:9.2px;color:#3c4043">2024/07/08</div>
<div class="t" style="left:529px;top:324.5px;font-size:10.3px;color:#3c4043;letter-spacing:-1.2px">マイルストーン</div>
<div class="a" style="left:637.5px;top:324.7px;width:91px;height:10px;background:#d5dbe5;border-radius:5px"></div>
<svg style="left:641.8px;top:327px" width="4.5" height="5.6" viewBox="0 0 10 14"><path d="M0 0h6l4 4v10H0z" fill="#1f1f1f"/></svg>
<div class="t" style="left:651px;top:325.5px;font-size:9px;color:#2a2b2e;letter-spacing:-0.15px">cara_profile_02.pdf</div>
<div class="a" style="left:33px;top:340px;width:719px;height:20px;background:#e1e7f3"></div>
<div class="a" style="left:4px;top:340px;width:29px;height:20px;background:#d3e3fd;border-bottom:1px solid #c2d0ea"></div>
<div class="t" style="left:3.2px;top:346px;width:29px;text-align:center;font-size:8.2px;font-weight:bold;color:#1b2a4e">11</div>
<div class="t" style="left:38.5px;top:344.5px;font-size:10.3px;color:#3c4043;letter-spacing:-1px">チケット校了</div>
<div class="a" style="left:156px;top:344px;width:68px;height:10.6px;background:#b5d3c4;border-radius:6px"></div>
<div class="t" style="left:160px;top:345.2px;font-size:9.8px;color:#2a3f33;">P3</div>
<svg style="left:213px;top:348.5px" width="6" height="3" viewBox="0 0 10 5"><path d="M0 0h10L5 5z" fill="#2a3f33"/></svg>
<div class="a" style="left:237px;top:344px;width:67px;height:10.6px;background:#f4e59c;border-radius:6px"></div>
<div class="t" style="left:240px;top:345.3px;font-size:9.2px;color:#6b4e12;letter-spacing:-0.2px">処理中</div>
<svg style="left:293px;top:348.5px" width="6" height="3" viewBox="0 0 10 5"><path d="M0 0h10L5 5z" fill="#6b4e12"/></svg>
<div class="t" style="left:310px;top:345.5px;width:101px;text-align:right;font-size:9.2px;color:#3c4043">2024/07/08</div>
<div class="t" style="left:417px;top:345.5px;width:101px;text-align:right;font-size:9.2px;color:#3c4043">2024/07/17</div>
<div class="t" style="left:529px;top:344.5px;font-size:10.3px;color:#3c4043;letter-spacing:-1.2px">校正2回予定</div>
<div class="a" style="left:637px;top:346px;width:53px;height:9px;background:#d5dbe5;border-radius:5px"></div>
<svg style="left:641.5px;top:347.5px" width="5" height="6" viewBox="0 0 10 12"><path d="M1 1h5l3 3v7H1z" fill="none" stroke="#5f6368" stroke-width="1.6"/></svg>
<div class="t" style="left:650.5px;top:344.8px;font-size:10.3px;color:#5f6368;letter-spacing:-1.2px">ファイル</div>
<div class="a" style="left:33px;top:360px;width:719px;height:20px;background:#e8eefa"></div>
<div class="a" style="left:4px;top:360px;width:29px;height:20px;background:#d3e3fd;border-bottom:1px solid #c2d0ea"></div>
<div class="t" style="left:3.2px;top:366px;width:29px;text-align:center;font-size:8.2px;font-weight:bold;color:#1b2a4e">12</div>
<div class="t" style="left:38.5px;top:364.5px;font-size:10.3px;color:#3c4043;letter-spacing:-1px">チケット手配り</div>
<div class="a" style="left:156px;top:364px;width:68px;height:10.6px;background:#6e9a7b;border-radius:6px"></div>
<div class="t" style="left:160px;top:365.2px;font-size:9.8px;color:#1e3326;">P2</div>
<svg style="left:213px;top:368.5px" width="6" height="3" viewBox="0 0 10 5"><path d="M0 0h10L5 5z" fill="#1e3326"/></svg>
<div class="a" style="left:237px;top:364px;width:67px;height:10.6px;background:#a6d1fa;border-radius:6px"></div>
<div class="t" style="left:240px;top:365.3px;font-size:9.2px;color:#2352b0;letter-spacing:-0.2px">開始前</div>
<svg style="left:293px;top:368.5px" width="6" height="3" viewBox="0 0 10 5"><path d="M0 0h10L5 5z" fill="#2352b0"/></svg>
<div class="t" style="left:310px;top:365.5px;width:101px;text-align:right;font-size:9.2px;color:#3c4043">2024/07/26</div>
<div class="t" style="left:417px;top:365.5px;width:101px;text-align:right;font-size:9.2px;color:#3c4043">2024/07/30</div>
<div class="t" style="left:529px;top:364.5px;font-size:10.3px;color:#3c4043;letter-spacing:-1.2px">マイルストーン</div>
<div class="a" style="left:637px;top:366px;width:53px;height:9px;background:#d5dbe5;border-radius:5px"></div>
<svg style="left:641.5px;top:367.5px" width="5" height="6" viewBox="0 0 10 12"><path d="M1 1h5l3 3v7H1z" fill="none" stroke="#5f6368" stroke-width="1.6"/></svg>
<div class="t" style="left:650.5px;top:364.8px;font-size:10.3px;color:#5f6368;letter-spacing:-1.2px">ファイル</div>
<div class="a" style="left:33px;top:380px;width:719px;height:20px;background:#e1e7f3"></div>
<div class="a" style="left:4px;top:380px;width:29px;height:20px;background:#d3e3fd;border-bottom:1px solid #c2d0ea"></div>
<div class="t" style="left:3.2px;top:386px;width:29px;text-align:center;font-size:8.2px;font-weight:bold;color:#1b2a4e">13</div>
<div class="t" style="left:38.5px;top:384.5px;font-size:10.3px;color:#3c4043;letter-spacing:-1px">チケット納品</div>
<div class="a" style="left:156px;top:384px;width:68px;height:10.6px;background:#b5d3c4;border-radius:6px"></div>
<div class="t" style="left:160px;top:385.2px;font-size:9.8px;color:#2a3f33;">P3</div>
<svg style="left:213px;top:388.5px" width="6" height="3" viewBox="0 0 10 5"><path d="M0 0h10L5 5z" fill="#2a3f33"/></svg>
<div class="a" style="left:237px;top:384px;width:67px;height:10.6px;background:#a6d1fa;border-radius:6px"></div>
<div class="t" style="left:240px;top:385.3px;font-size:9.2px;color:#2352b0;letter-spacing:-0.2px">開始前</div>
<svg style="left:293px;top:388.5px" width="6" height="3" viewBox="0 0 10 5"><path d="M0 0h10L5 5z" fill="#2352b0"/></svg>
<div class="t" style="left:310px;top:385.5px;width:101px;text-align:right;font-size:9.2px;color:#3c4043">2024/07/18</div>
<div class="t" style="left:417px;top:385.5px;width:101px;text-align:right;font-size:9.2px;color:#3c4043">2024/07/25</div>
<div class="t" style="left:529px;top:384.5px;font-size:10.3px;color:#3c4043;letter-spacing:-1.2px">マイルストーン</div>
<div class="a" style="left:637px;top:386px;width:53px;height:9px;background:#d5dbe5;border-radius:5px"></div>
<svg style="left:641.5px;top:387.5px" width="5" height="6" viewBox="0 0 10 12"><path d="M1 1h5l3 3v7H1z" fill="none" stroke="#5f6368" stroke-width="1.6"/></svg>
<div class="t" style="left:650.5px;top:384.8px;font-size:10.3px;color:#5f6368;letter-spacing:-1.2px">ファイル</div>
<div class="a" style="left:33px;top:400px;width:719px;height:20px;background:#e8eefa"></div>
<div class="a" style="left:4px;top:400px;width:29px;height:20px;background:#d3e3fd;border-bottom:1px solid #c2d0ea"></div>
<div class="t" style="left:3.2px;top:406px;width:29px;text-align:center;font-size:8.2px;font-weight:bold;color:#1b2a4e">14</div>
<div class="t" style="left:38.5px;top:404.5px;font-size:10.3px;color:#3c4043;letter-spacing:-1px">チケット発注</div>
<div class="a" style="left:156px;top:404px;width:68px;height:10.6px;background:#6e9a7b;border-radius:6px"></div>
<div class="t" style="left:160px;top:405.2px;font-size:9.8px;color:#1e3326;">P2</div>
<svg style="left:213px;top:408.5px" width="6" height="3" viewBox="0 0 10 5"><path d="M0 0h10L5 5z" fill="#1e3326"/></svg>
<div class="a" style="left:237px;top:404px;width:67px;height:10.6px;background:#a6d1fa;border-radius:6px"></div>
<div class="t" style="left:240px;top:405.3px;font-size:9.2px;color:#2352b0;letter-spacing:-0.2px">開始前</div>
<svg style="left:293px;top:408.5px" width="6" height="3" viewBox="0 0 10 5"><path d="M0 0h10L5 5z" fill="#2352b0"/></svg>
<div class="t" style="left:310px;top:405.5px;width:101px;text-align:right;font-size:9.2px;color:#3c4043">2024/07/18</div>
<div class="t" style="left:417px;top:405.5px;width:101px;text-align:right;font-size:9.2px;color:#3c4043">2024/07/18</div>
<div class="t" style="left:529px;top:404.5px;font-size:10.3px;color:#3c4043;letter-spacing:-1.2px">マイルストーン</div>
<div class="a" style="left:637px;top:406px;width:53px;height:9px;background:#d5dbe5;border-radius:5px"></div>
<svg style="left:641.5px;top:407.5px" width="5" height="6" viewBox="0 0 10 12"><path d="M1 1h5l3 3v7H1z" fill="none" stroke="#5f6368" stroke-width="1.6"/></svg>
<div class="t" style="left:650.5px;top:404.8px;font-size:10.3px;color:#5f6368;letter-spacing:-1.2px">ファイル</div>
<div class="a" style="left:33px;top:160px;width:1px;height:260px;background:#5b6170"></div>
<div class="a" style="left:33px;top:419px;width:719px;height:1.2px;background:#6c9be6"></div>
<div class="a" style="left:4px;top:420px;width:748px;height:52px;background:#f8faf8"></div>
<div class="t" style="left:32.5px;top:432px;font-size:9.5px;color:#3c4043;">一番下に</div>
<div class="a" style="left:78px;top:427px;width:38px;height:20px;border:1px solid #a8a49e;border-radius:3px;background:#f8faf8"></div>
<div class="t" style="left:78px;top:432px;width:38px;text-align:center;font-size:9.8px;color:#1f1f1f">1000</div>
<div class="t" style="left:122px;top:430px;font-size:9.5px;color:#3c4043;">行</div>
<div class="t" style="left:147px;top:431px;font-size:9.5px;color:#0b57d0;">追加</div>
<div class="a" style="left:4px;top:472px;width:756px;height:9px;background:#fff;border-top:1px solid #e8e8e8"></div>
<div class="a" style="left:4px;top:472px;width:29px;height:9px;background:#f8f9fa;border-right:1px solid #e3e3e3"></div>
<div class="a" style="left:35px;top:473.5px;width:256px;height:6px;background:#dadce0;border-radius:3px"></div>
<div class="a" style="left:752px;top:97px;width:8px;height:384px;background:#fafafa;border-left:1px solid #efefef"></div>
<div class="a" style="left:3px;top:481px;width:794px;height:24px;background:#f9fbfd;border-top:1px solid #e6e6e6;border-radius:0 0 6px 6px"></div>
<div class="a" style="left:40px;top:493.5px;width:8px;height:1.1px;background:#444746"></div>
<div class="a" style="left:43.5px;top:490px;width:1.1px;height:8px;background:#444746"></div>
<div class="a" style="left:65px;top:490px;width:10px;height:1.2px;background:#444746"></div>
<div class="a" style="left:65px;top:493px;width:10px;height:1.2px;background:#444746"></div>
<div class="a" style="left:65px;top:496px;width:10px;height:1.2px;background:#444746"></div>
<div class="a" style="left:92px;top:482px;width:60px;height:23px;background:#e1e9f7"></div>
<div class="t" style="left:99px;top:490px;font-size:9.5px;color:#2f55a8;">シート1</div>
<svg style="left:139px;top:493px" width="6" height="3" viewBox="0 0 10 5"><path d="M0 0h10L5 5z" fill="#2f55a8"/></svg>
<div class="t" style="left:161px;top:490px;font-size:9.5px;color:#3c4043;">シート3</div>
<svg style="left:202px;top:493px" width="6" height="3" viewBox="0 0 10 5"><path d="M0 0h10L5 5z" fill="#444746"/></svg>
<div class="t" style="left:224px;top:490px;font-size:9.5px;color:#3c4043;">シート4</div>
<svg style="left:265px;top:493px" width="6" height="3" viewBox="0 0 10 5"><path d="M0 0h10L5 5z" fill="#444746"/></svg>
<div class="t" style="left:288px;top:490px;font-size:9.5px;color:#3c4043;">シート5</div>
<svg style="left:329px;top:493px" width="6" height="3" viewBox="0 0 10 5"><path d="M0 0h10L5 5z" fill="#444746"/></svg>
<div class="t" style="left:352px;top:490px;font-size:9.5px;color:#3c4043;">シート6</div>
<svg style="left:393px;top:493px" width="6" height="3" viewBox="0 0 10 5"><path d="M0 0h10L5 5z" fill="#444746"/></svg>
<div class="a" style="left:655px;top:484px;width:97px;height:19px;background:#c8ebd1;border-radius:6px"></div>
<div class="t" style="left:661px;top:489.5px;font-size:9.3px;color:#0d3d1f;font-weight:bold">最小: 2024/07/01</div>
<svg style="left:739px;top:493px" width="6" height="3" viewBox="0 0 10 5"><path d="M0 0h10L5 5z" fill="#0d3d1f"/></svg>
<svg style="left:775.5px;top:482.5px" width="6" height="9" viewBox="0 0 6 10"><path d="M1 1l4 4-4 4" fill="none" stroke="#444746" stroke-width="1.6"/></svg>
<div class="a" style="left:181px;top:132px;width:174px;height:83.5px;background:#fff;border-radius:4px;box-shadow:0 1px 3px rgba(60,64,67,.25),0 2px 6px 1px rgba(60,64,67,.12)"></div>
<div class="a" style="left:181px;top:134px;width:174px;height:23px;background:#f1f1f1"></div>
<div class="a" style="left:192px;top:146.5px;width:8px;height:1px;background:#444746"></div>
<div class="a" style="left:195.5px;top:143.0px;width:1px;height:8px;background:#444746"></div>
<div class="t" style="left:206px;top:141.5px;font-size:10.3px;color:#1f1f1f;letter-spacing:-0.45px">グループ化ビューを作成</div>
<div class="a" style="left:192px;top:167px;width:8px;height:1px;background:#444746"></div>
<div class="a" style="left:195.5px;top:163.5px;width:1px;height:8px;background:#444746"></div>
<div class="t" style="left:206px;top:162px;font-size:10.3px;color:#1f1f1f;letter-spacing:-0.45px">フィルタビューを作成</div>
<svg style="left:339.5px;top:144.5px" width="6" height="6" viewBox="0 0 6 6"><path d="M0 0l6 3-6 3z" fill="#1f1f1f"/></svg>
<div class="a" style="left:181px;top:184px;width:174px;height:1px;background:#e0e0e0"></div>
<div class="t" style="left:206px;top:194.5px;font-size:10.3px;color:#1f1f1f;letter-spacing:-0.45px">終了日 による一時的なグループ</div>
<div class="a" style="left:355px;top:136.5px;width:174px;height:179px;background:#fff;border-radius:4px;box-shadow:0 1px 3px rgba(60,64,67,.25),0 2px 6px 1px rgba(60,64,67,.12)"></div>
<div class="a" style="left:355px;top:204px;width:174px;height:21px;background:#efefef"></div>
<div class="t" style="left:380px;top:145.5px;font-size:10.3px;color:#1f1f1f;letter-spacing:-0.45px">タスク</div>
<div class="t" style="left:380px;top:166.8px;font-size:10.3px;color:#1f1f1f;letter-spacing:-0.45px">優先度</div>
<div class="t" style="left:380px;top:187.7px;font-size:10.3px;color:#1f1f1f;letter-spacing:-0.45px">ステータス</div>
<div class="t" style="left:380px;top:208.5px;font-size:10.3px;color:#1f1f1f;letter-spacing:-0.45px">開始日</div>
<div class="t" style="left:380px;top:230.5px;font-size:10.3px;color:#1f1f1f;letter-spacing:-0.45px">終了日</div>
<div class="t" style="left:380px;top:251.5px;font-size:10.3px;color:#1f1f1f;letter-spacing:-0.45px">マイルストーン</div>
<div class="t" style="left:380px;top:273.1px;font-size:10.3px;color:#1f1f1f;letter-spacing:-0.45px">成果</div>
<div class="t" style="left:380px;top:294.3px;font-size:10.3px;color:#1f1f1f;letter-spacing:-0.45px">備考</div>
<svg style="left:0;top:0" width="800" height="509"><circle cx="190.8" cy="123.2" r="14.5" fill="none" stroke="#d81e3c" stroke-width="1.9"/><ellipse cx="442" cy="214.3" rx="103.5" ry="12.2" fill="none" stroke="#d42a35" stroke-width="1.4"/></svg>
<svg style="left:772px;top:55px" width="12" height="12" viewBox="0 0 24 24"><rect x="0" y="0" width="24" height="24" rx="2" fill="#1e88e5"/><rect x="0" y="18" width="18" height="6" fill="#34a853"/><rect x="18" y="0" width="6" height="18" fill="#fbbc04"/><rect x="18" y="18" width="6" height="6" fill="#ea4335"/><rect x="4" y="4" width="14" height="14" fill="#fff"/><text x="11" y="15.5" font-size="9" text-anchor="middle" fill="#1a73e8" font-family="Liberation Sans" font-weight="bold">31</text></svg>
<svg style="left:772px;top:92px" width="12" height="12" viewBox="0 0 24 24"><rect x="0" y="0" width="24" height="24" rx="2" fill="#fbbc04"/><circle cx="12" cy="11" r="5" fill="#fff"/><rect x="10" y="15" width="4" height="4" fill="#fff"/></svg>
<svg style="left:772px;top:129px" width="12" height="12" viewBox="0 0 24 24"><circle cx="12" cy="12" r="9" fill="none" stroke="#1a73e8" stroke-width="3.5"/><path d="M7.5 12l3.5 3.5 7-7" fill="none" stroke="#1a73e8" stroke-width="3"/></svg>
<svg style="left:773px;top:166px" width="10" height="12" viewBox="0 0 20 24"><circle cx="10" cy="6" r="5" fill="#1a73e8"/><path d="M0 22q0-8 10-8t10 8v2H0z" fill="#1a73e8"/></svg>
<svg style="left:773px;top:203px" width="11" height="13" viewBox="0 0 22 26"><path d="M11 0a10 10 0 0 1 10 10c0 6-10 16-10 16S1 16 1 10A10 10 0 0 1 11 0z" fill="#34a853"/><path d="M11 0a10 10 0 0 1 10 10H11z" fill="#4285f4"/><path d="M1 10A10 10 0 0 1 11 0v10z" fill="#ea4335"/><path d="M4 17l7-7" stroke="#fbbc04" stroke-width="4"/><circle cx="11" cy="10" r="3.5" fill="#fff"/></svg>
<div class="a" style="left:770px;top:238px;width:16px;height:1px;background:#dadce0"></div>
<div class="a" style="left:773px;top:267.5px;width:10px;height:1.4px;background:#1f1f1f"></div>
<div class="a" style="left:777.3px;top:263.2px;width:1.4px;height:10px;background:#1f1f1f"></div>
<svg style="left:754px;top:453px" width="5" height="4" viewBox="0 0 10 6"><path d="M0 6L5 0l5 6z" fill="#9aa0a6"/></svg>
<svg style="left:754px;top:465px" width="5" height="4" viewBox="0 0 10 6"><path d="M0 0h10L5 6z" fill="#9aa0a6"/></svg>
<svg style="left:734.5px;top:474px" width="4" height="5" viewBox="0 0 6 10"><path d="M6 0v10L0 5z" fill="#9aa0a6"/></svg>
<svg style="left:745.5px;top:474px" width="4" height="5" viewBox="0 0 6 10"><path d="M0 0v10l6-5z" fill="#9aa0a6"/></svg>
<div class="a" style="left:730px;top:472px;width:1px;height:9px;background:#ececec"></div>
<div class="a" style="left:741px;top:472px;width:1px;height:9px;background:#ececec"></div>
<div class="a" style="left:752px;top:449px;width:8px;height:1px;background:#ececec"></div>
<div class="a" style="left:752px;top:461px;width:8px;height:1px;background:#ececec"></div>
</body></html>
